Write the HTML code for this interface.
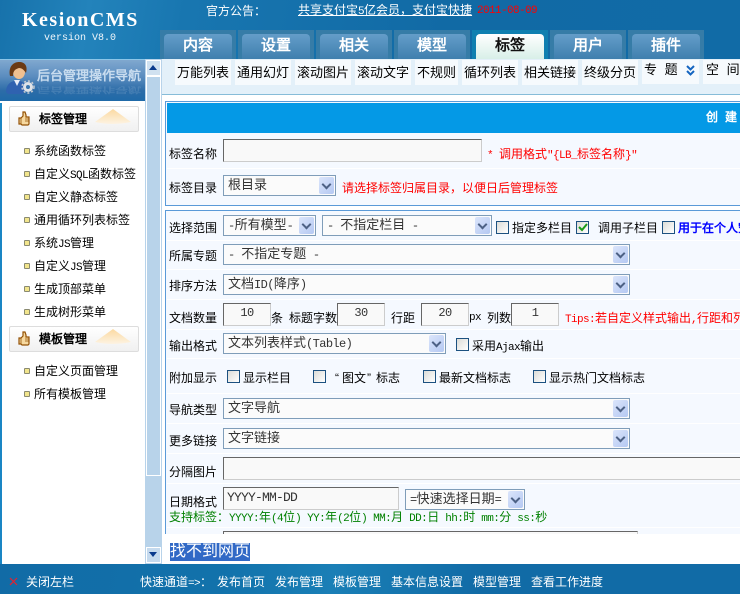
<!DOCTYPE html>
<html><head><meta charset="utf-8"><title>KesionCMS</title>
<style>
html,body{margin:0;padding:0;background:#fff}
#p{position:relative;width:740px;height:594px;overflow:hidden;background:#fff;font:12px/14px "WenQuanYi Zen Hei","Liberation Sans",sans-serif;color:#000}
#p div,#p span.a,#p svg.a{position:absolute}
.t{position:absolute;white-space:nowrap;line-height:14px}
.tab{position:absolute;top:34px;width:68px;height:25px;border-radius:4px 4px 0 0;background:linear-gradient(#649dc9,#3f7fae);color:#fff;font-weight:bold;font-size:15px;line-height:24px;text-align:center;letter-spacing:0}
.to{position:absolute;top:30px;width:76px;height:29px;background:#367ca7}
.sb{position:absolute;top:60px;height:25px;background:#f6fafd;text-align:center;line-height:25px;white-space:nowrap;font-size:13px}
.sel{position:absolute;box-sizing:border-box;border:1px solid #7f9db9;background:#fbfbfb;color:#333;line-height:18px;padding-left:4px;white-space:pre;overflow:hidden;font-size:13px}
.sel i{position:absolute;right:1px;top:1px;bottom:1px;width:15px;background:linear-gradient(135deg,#dbe5fb,#b4c8f2);border-radius:2px}
.sel i:after{content:"";position:absolute;left:4px;top:calc(50% - 5px);width:5px;height:5px;border-right:2px solid #4d6185;border-bottom:2px solid #4d6185;transform:rotate(45deg)}
.inp{position:absolute;box-sizing:border-box;border:1px solid;border-color:#666 #ccc #ccc #666;background:#f9f9f9;color:#333;white-space:pre;overflow:hidden;font:12px "Liberation Mono",monospace;letter-spacing:-.6px}
.cb{position:absolute;box-sizing:border-box;width:13px;height:13px;border:1px solid #1c5180;background:linear-gradient(135deg,#dcdcd7,#fff)}
.sep{position:absolute;left:167px;right:0;height:1px;background:#fff}
.lab{left:169px}
.mn{position:absolute;left:34px;white-space:nowrap;line-height:14px}
.bu{position:absolute;left:24px;width:4px;height:4px;border:1px solid #8a8a70;background:#f2e58c;border-radius:1px}
.hd{position:absolute;left:9px;width:130px;height:26px;box-sizing:border-box;border:1px solid #ddd;border-radius:2px;background:linear-gradient(#fff,#f0f0f0)}
.bt{position:absolute;left:29px;top:5px;font-weight:bold;white-space:nowrap;letter-spacing:0;line-height:14px}
.mo{font-family:"Liberation Mono",monospace;font-size:11px;letter-spacing:-.6px;white-space:pre}
.m1{font-family:"Liberation Mono",monospace;font-size:12px;letter-spacing:-.6px;white-space:pre}
.w{color:#fff}
</style></head><body><div id="p">

<!-- header -->
<div style="left:0;top:0;width:740px;height:59px;background:linear-gradient(100deg,#1772ab 0%,#2383bb 12%,#1876b0 25%,#116aa5 60%,#116ba6 100%)"></div>
<div class="t" style="left:22px;top:8px;font:bold 20px/24px 'Liberation Serif',serif;color:#fff;letter-spacing:1.500px">KesionCMS</div>
<div class="t mo" style="left:44px;top:32px;color:#f0f6fb;font-size:10px;letter-spacing:0">version V8.0</div>
<div class="t w" style="left:206px;top:4px">官方公告：</div>
<div class="t w" style="left:298px;top:3px;text-decoration:underline">共享支付宝<span class="mo">5</span>亿会员，支付宝快捷</div>
<div class="t mo" style="left:477px;top:4px;color:#f00">2011-08-09</div>

<div class="to" style="left:160px"></div><div class="to" style="left:238px"></div><div class="to" style="left:316px"></div><div class="to" style="left:394px"></div><div class="to" style="left:472px;background:#0f7fb0"></div><div class="to" style="left:550px"></div><div class="to" style="left:628px"></div>
<div class="tab" style="left:164px">内容</div>
<div class="tab" style="left:242px">设置</div>
<div class="tab" style="left:320px">相关</div>
<div class="tab" style="left:398px">模型</div>
<div class="tab" style="left:476px;background:linear-gradient(#fff,#d8efe8);color:#111">标签</div>
<div class="tab" style="left:554px">用户</div>
<div class="tab" style="left:632px">插件</div>

<!-- sub nav -->
<div style="left:162px;top:59px;width:578px;height:35px;background:#e3f0f9"></div>
<div class="sb" style="left:175px;width:56px">万能列表</div>
<div class="sb" style="left:235px;width:56px">通用幻灯</div>
<div class="sb" style="left:295px;width:56px">滚动图片</div>
<div class="sb" style="left:355px;width:56px">滚动文字</div>
<div class="sb" style="left:415px;width:43px">不规则</div>
<div class="sb" style="left:462px;width:56px">循环列表</div>
<div class="sb" style="left:522px;width:56px">相关链接</div>
<div class="sb" style="left:582px;width:56px">终级分页</div>
<div class="sb" style="left:642px;width:57px;height:24px;text-align:left;line-height:20px;padding-left:2px;box-sizing:border-box;word-spacing:4px">专 题</div>
<svg class="a" style="left:686px;top:65px" width="9" height="11" viewBox="0 0 9 11"><path d="M1 1l3.500 3.500L8 1M1 6l3.500 3.500L8 6" fill="none" stroke="#1565c0" stroke-width="2"/></svg>
<div class="sb" style="left:703px;width:37px;height:24px;text-align:left;line-height:20px;padding-left:3px;box-sizing:border-box;word-spacing:4px">空 间</div>
<div style="left:162px;top:94px;width:578px;height:1px;background:#86bcd8"></div>

<!-- left nav header -->
<div style="left:0;top:59px;width:146px;height:1px;background:#8cc6e8"></div>
<div style="left:0;top:60px;width:146px;height:41px;background:linear-gradient(#80a8cf 0%,#5b8dbf 40%,#2c6ca8 75%,#1f6aa8 100%)"></div>
<svg class="a" style="left:5px;top:61px" width="30" height="34" viewBox="0 0 30 34">
<path d="M1 31c0-7 4-10 8-11h6c3 1 6 3 6 8l-3 5H3z" fill="#2f62b0"/>
<path d="M9 19l3 6 3-6z" fill="#e8eef8"/>
<ellipse cx="14" cy="11" rx="6" ry="7" fill="#f0c090"/>
<path d="M5 15C3 5 9 1 14 1c6 0 9 4 7 11-2-3-4-5-7-5-3 1-6 2-6 8z" fill="#6b3a14"/>
<circle cx="23" cy="26" r="3.500" fill="none" stroke="#dfe3e8" stroke-width="3"/>
<circle cx="23" cy="26" r="6" fill="none" stroke="#c8ccd2" stroke-width="1.500" stroke-dasharray="2 2"/>
</svg>
<div class="t" style="left:37px;top:69px;width:109px;overflow:hidden;font-weight:bold;font-size:13px;color:#c8dcef">后台管理操作导航</div>
<div class="t" style="left:37px;top:83px;width:109px;overflow:hidden;font-weight:bold;font-size:13px;color:#7fa8cd;opacity:.3;transform:scaleY(-.6)">后台管理操作导航</div>

<!-- left strip + sidebar -->
<div style="left:0;top:103px;width:2px;height:461px;background:#1a86c4"></div>

<div class="hd" style="top:106px">
<svg class="a" style="left:8px;top:4px" width="12" height="15" viewBox="0 0 12 15"><path d="M1 7h2l2-2V1h2l1 3v2h3v7l-1 1H4L3 13H1z" fill="#f6d9a0" stroke="#945206" stroke-width="1.200"/><path d="M3 7v6M7 8h4M7 10h4" stroke="#945206" stroke-width=".8"/></svg>
<div class="bt">标签管理</div>
<svg class="a" style="left:85px;top:2px" width="36" height="16" viewBox="0 0 36 16"><defs><linearGradient id="g" x1="0" y1="0" x2="0" y2="1"><stop offset="0" stop-color="#fbd9a0"/><stop offset="1" stop-color="#fdf3e2"/></linearGradient></defs><path d="M18 0L36 13Q18 17 0 13z" fill="url(#g)"/></svg>
</div>
<div class="bu" style="top:148px"></div><div class="mn" style="top:144px">系统函数标签</div>
<div class="bu" style="top:171px"></div><div class="mn" style="top:167px">自定义<span class="mo">SQL</span>函数标签</div>
<div class="bu" style="top:194px"></div><div class="mn" style="top:190px">自定义静态标签</div>
<div class="bu" style="top:217px"></div><div class="mn" style="top:213px">通用循环列表标签</div>
<div class="bu" style="top:240px"></div><div class="mn" style="top:236px">系统<span class="mo">JS</span>管理</div>
<div class="bu" style="top:263px"></div><div class="mn" style="top:259px">自定义<span class="mo">JS</span>管理</div>
<div class="bu" style="top:286px"></div><div class="mn" style="top:282px">生成顶部菜单</div>
<div class="bu" style="top:309px"></div><div class="mn" style="top:305px">生成树形菜单</div>
<div class="hd" style="top:326px">
<svg class="a" style="left:8px;top:4px" width="12" height="15" viewBox="0 0 12 15"><path d="M1 7h2l2-2V1h2l1 3v2h3v7l-1 1H4L3 13H1z" fill="#f6d9a0" stroke="#945206" stroke-width="1.200"/><path d="M3 7v6M7 8h4M7 10h4" stroke="#945206" stroke-width=".8"/></svg>
<div class="bt">模板管理</div>
<svg class="a" style="left:85px;top:2px" width="36" height="16" viewBox="0 0 36 16"><path d="M18 0L36 13Q18 17 0 13z" fill="url(#g)"/></svg>
</div>
<div class="bu" style="top:368px"></div><div class="mn" style="top:364px">自定义页面管理</div>
<div class="bu" style="top:391px"></div><div class="mn" style="top:387px">所有模板管理</div>

<!-- scrollbar -->
<div style="left:145px;top:59px;width:17px;height:505px;background:#b8d3ea"></div>
<div style="left:146px;top:60px;width:13px;height:14px;background:#d0e1f0;border:1px solid #fff"></div>
<svg class="a" style="left:149px;top:65px" width="8" height="5"><path d="M4 0L8 5H0z" fill="#0a3a8c"/></svg>
<div style="left:146px;top:76px;width:13px;height:398px;border:1px solid #fff;background:#b8d3ea"></div>
<div style="left:146px;top:547px;width:13px;height:14px;background:#c5daee;border:1px solid #fff"></div>
<svg class="a" style="left:149px;top:552px" width="8" height="5"><path d="M4 5L8 0H0z" fill="#0a3a8c"/></svg>

<!-- form panel -->
<div style="left:165px;top:101px;width:575px;height:105px;box-sizing:border-box;border:1px solid #5a9ad8;border-right:0;background:#f5f9ff"></div>
<div style="left:167px;top:103px;width:573px;height:30px;background:#0499e6"></div>
<div class="t w" style="left:706px;top:110px;font-weight:bold">创</div>
<div class="t w" style="left:725px;top:110px;font-weight:bold">建</div>
<div style="left:165px;top:210px;width:575px;height:324px;box-sizing:border-box;border:1px solid #5a9ad8;border-width:1px 0 0 1px;background:#f5f9ff"></div>

<div class="sep" style="top:168px"></div>
<div class="sep" style="top:240px"></div>
<div class="sep" style="top:269px"></div>
<div class="sep" style="top:299px"></div>
<div class="sep" style="top:329px"></div>
<div class="sep" style="top:358px"></div>
<div class="sep" style="top:393px"></div>
<div class="sep" style="top:423px"></div>
<div class="sep" style="top:453px"></div>
<div class="sep" style="top:483px"></div>
<div class="sep" style="top:527px"></div>

<div class="t lab" style="top:147px">标签名称</div>
<div class="inp" style="left:223px;top:139px;width:259px;height:23px"></div>
<div class="t" style="left:487px;top:147px;color:#f00"><span class="mo">* </span>调用格式<span class="mo">"{LB_</span>标签名称<span class="mo">}"</span></div>

<div class="t lab" style="top:181px">标签目录</div>
<div class="sel" style="left:223px;top:175px;width:113px;height:21px">根目录<i></i></div>
<div class="t" style="left:342px;top:181px;color:#f00">请选择标签归属目录，以便日后管理标签</div>

<div class="t lab" style="top:221px">选择范围</div>
<div class="sel" style="left:223px;top:215px;width:93px;height:21px"><span class="m1">-</span>所有模型<span class="m1">-</span><i></i></div>
<div class="sel" style="left:322px;top:215px;width:170px;height:21px"><span class="m1">- </span>不指定栏目<span class="m1"> -</span><i></i></div>
<div class="cb" style="left:496px;top:221px"></div><div class="t" style="left:512px;top:221px">指定多栏目</div>
<div class="cb" style="left:576px;top:221px"></div>
<svg class="a" style="left:578px;top:223px" width="10" height="9"><path d="M1 4l3 3 5-6" fill="none" stroke="#1a9a1a" stroke-width="2"/></svg>
<div class="t" style="left:598px;top:221px">调用子栏目</div>
<div class="cb" style="left:662px;top:221px"></div><div class="t" style="left:678px;top:221px;color:#00f;font-weight:bold">用于在个人空间</div>

<div class="t lab" style="top:249px">所属专题</div>
<div class="sel" style="left:223px;top:244px;width:407px;height:21px"><span class="m1">- </span>不指定专题<span class="m1"> -</span><i></i></div>

<div class="t lab" style="top:279px">排序方法</div>
<div class="sel" style="left:223px;top:274px;width:407px;height:21px">文档<span class="m1">ID(</span>降序<span class="m1">)</span><i></i></div>

<div class="t lab" style="top:311px">文档数量</div>
<div class="inp" style="left:223px;top:303px;width:48px;height:23px;text-align:center;line-height:18px">10</div>
<div class="t" style="left:271px;top:311px">条</div>
<div class="t" style="left:289px;top:311px">标题字数</div>
<div class="inp" style="left:337px;top:303px;width:48px;height:23px;text-align:center;line-height:18px">30</div>
<div class="t" style="left:391px;top:311px">行距</div>
<div class="inp" style="left:421px;top:303px;width:48px;height:23px;text-align:center;line-height:18px">20</div>
<div class="t mo" style="left:469px;top:311px">px</div>
<div class="t" style="left:487px;top:311px">列数</div>
<div class="inp" style="left:511px;top:303px;width:48px;height:23px;text-align:center;line-height:18px">1</div>
<div class="t" style="left:565px;top:311px;color:#f00"><span class="mo">Tips:</span>若自定义样式输出<span class="mo">,</span>行距和列数无效</div>

<div class="t lab" style="top:339px">输出格式</div>
<div class="sel" style="left:223px;top:333px;width:223px;height:21px">文本列表样式<span class="m1">(Table)</span><i></i></div>
<div class="cb" style="left:456px;top:338px"></div><div class="t" style="left:472px;top:339px">采用<span class="mo">Ajax</span>输出</div>

<div class="t lab" style="top:371px">附加显示</div>
<div class="cb" style="left:227px;top:370px"></div><div class="t" style="left:243px;top:371px">显示栏目</div>
<div class="cb" style="left:313px;top:370px"></div>
<div class="t" style="left:335px;top:371px">“</div><div class="t" style="left:342px;top:371px">图文</div><div class="t" style="left:367px;top:371px">”</div><div class="t" style="left:376px;top:371px">标志</div>
<div class="cb" style="left:423px;top:370px"></div><div class="t" style="left:439px;top:371px">最新文档标志</div>
<div class="cb" style="left:533px;top:370px"></div><div class="t" style="left:549px;top:371px">显示热门文档标志</div>

<div class="t lab" style="top:403px">导航类型</div>
<div class="sel" style="left:223px;top:398px;width:407px;height:21px">文字导航<i></i></div>

<div class="t lab" style="top:434px">更多链接</div>
<div class="sel" style="left:223px;top:428px;width:407px;height:21px">文字链接<i></i></div>

<div class="t lab" style="top:465px">分隔图片</div>
<div class="inp" style="left:223px;top:457px;width:517px;height:23px;border-right:0"></div>

<div class="t lab" style="top:495px">日期格式</div>
<div class="inp" style="left:223px;top:487px;width:176px;height:23px;padding-left:3px;line-height:19px;font-size:13px;letter-spacing:-.8px">YYYY-MM-DD</div>
<div class="sel" style="left:405px;top:489px;width:120px;height:21px"><span class="m1">=</span>快速选择日期<span class="m1">=</span><i></i></div>
<div class="t" style="left:169px;top:510px;color:#008000">支持标签：<span class="mo">YYYY:</span>年<span class="mo">(4</span>位<span class="mo">) YY:</span>年<span class="mo">(2</span>位<span class="mo">) MM:</span>月<span class="mo"> DD:</span>日<span class="mo"> hh:</span>时<span class="mo"> mm:</span>分<span class="mo"> ss:</span>秒</div>

<div class="inp" style="left:223px;top:531px;width:415px;height:20px;border-bottom:0"></div>
<div style="left:162px;top:534px;width:578px;height:30px;background:#fff"></div>
<div class="t" style="left:170px;top:543px;background:#3169c6;color:#fff;font-size:16px;line-height:18px">找不到网页</div>

<!-- footer -->
<div style="left:0;top:564px;width:740px;height:30px;background:linear-gradient(100deg,#116ba6 0%,#1272ab 30%,#1a7fb6 45%,#116ba6 65%)"></div>
<svg class="a" style="left:9px;top:577px" width="9" height="9"><path d="M1 1l7 7M8 1L1 8" stroke="#e8202c" stroke-width="1.200"/></svg>
<div class="t w" style="left:26px;top:575px">关闭左栏</div>
<div class="t w" style="left:140px;top:575px">快速通道<span class="mo">=&gt;</span>：</div>
<div class="t w" style="left:217px;top:575px">发布首页</div>
<div class="t w" style="left:275px;top:575px">发布管理</div>
<div class="t w" style="left:333px;top:575px">模板管理</div>
<div class="t w" style="left:391px;top:575px">基本信息设置</div>
<div class="t w" style="left:473px;top:575px">模型管理</div>
<div class="t w" style="left:531px;top:575px">查看工作进度</div>
</div></body></html>
